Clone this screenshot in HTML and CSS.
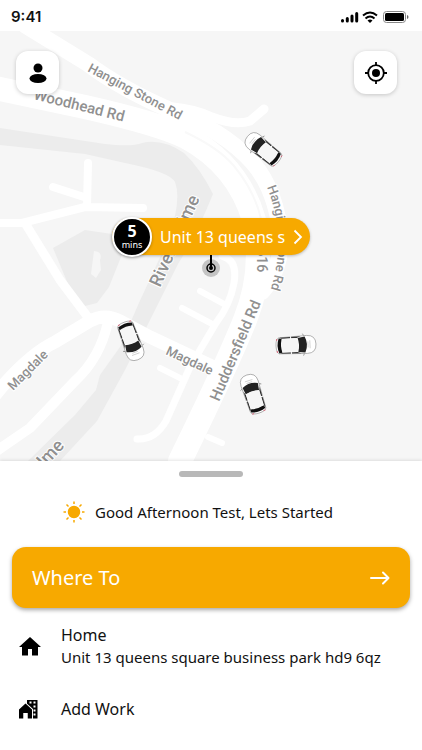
FILE: index.html
```html
<!DOCTYPE html>
<html lang="en">
<head>
    <meta charset="UTF-8">
    <meta name="viewport" content="width=device-width, initial-scale=1.0">
    <title>Book a Ride</title>
    <link rel="stylesheet" href="styles.css">
</head>
<body>
    <header class="status-bar">
        <span class="time">9:41</span>
        <svg class="status-icons" width="70" height="14" viewBox="0 0 70 14" aria-hidden="true">
            <g stroke="#000" stroke-width="3" stroke-linecap="round">
                <path d="M3.500 10.500v.5M8.300 8.500V11M13 6v5M17.700 3.500V11"/>
            </g>
            <g fill="none" stroke="#000" stroke-width="2">
                <path d="M24 5.500q7-6 14 0M26.500 8.500q4.500-4 9 0"/>
            </g>
            <path d="M28.500 10.500q2.500-2 5 0L31 13z"/>
            <rect x="44.500" y="1.500" width="22" height="11" rx="3" fill="none" stroke="#888"/>
            <rect x="46" y="3" width="19" height="8" rx="1.500"/>
            <path d="M68 5v4q1.500-.5 1.500-2T68 5z" fill="#666"/>
        </svg>
    </header>

    <main>
        <section class="map">
            <svg class="map-canvas" viewBox="0 31 422 430" role="img" aria-label="Map of nearby cars">
                <defs>
                    <g id="car">
                        <path d="M-9-11Q-9-20 0-20T9-11L8 17Q7 20 0 20T-8 17Z" fill="#fff" stroke="#888" stroke-width=".6"/>
                        <path d="M-4-14H4M-3-12H3" stroke="#ccc" stroke-width=".8"/>
                        <path d="M-9-8l-2 1M9-8l2 1" stroke="#888" stroke-width=".8"/>
                        <path d="M-8-9Q0-13 8-9L7-2Q0-4-7-2Z" fill="#222"/>
                        <path d="M-8.500-5L-7-1V14L-8 16ZM8.500-5L7-1V14L8 16Z" fill="#333"/>
                        <path d="M-7 14H7L7.500 17Q0 20-7.500 17Z" fill="#111"/>
                        <path d="M-7-1Q0-4 7-1L6.500 14Q0 16-6.500 14Z" fill="#f6f6f6"/>
                        <path d="M-9 5H-6M6 5H9" stroke="#fff"/>
                        <path d="M-7 19h2M5 19h2" stroke="#d9536b" stroke-width=".8"/>
                    </g>
                </defs>
                <rect y="31" width="422" height="430" fill="#f6f6f6"/>

                <!-- river and woodland -->
                <g fill="#ececec">
                    <path d="M0 128L105 144Q132 147 142 143Q162 138 184 153Q200 168 213 194Q197 234 178 264L145 330L125 370L97 421L60 461H28L75 415L96 390L100 375L120 347L138 305L168 240Q182 200 175 182Q170 172 125 163L85 154L0 145Z"/>
                    <path d="M53 248L85 230L112 234L123 252L109 287L97 303L85 306L73 296Z"/>
                </g>
                <path d="M94 251Q103 252 100 260L101 270L96 278L91 274Z" fill="#f6f6f6"/>

                <!-- roads -->
                <g class="road">
                    <path d="M-5 223H22L85 207L143 208M88 163L87 207M53 187L87 198" stroke-width="8"/>
                    <path d="M25 223L60 280L90 320" stroke-width="9"/>
                    <path d="M-5 395Q28 355 55 342L90 321Q105 313 120 321L150 337L220 370" stroke-width="13"/>
                    <path d="M108 322Q100 358 75 381L30 428L-5 452" stroke-width="10"/>
                    <path d="M222 256Q238 260 234 283Q230 305 216 323L190 367L166 421Q155 440 137 439" stroke-width="7"/>
                    <path d="M200 291L224 304M182 308L214 325M160 368L180 378M208 437L222 443" stroke-width="6"/>
                    <path d="M173 107Q195 109 212 117Q235 126 250 121L264 109" stroke-width="9"/>
                    <path d="M-5 88L85 107Q160 124 186 137Q238 165 254 220Q265 270 245 320Q227 365 180 461" stroke-width="24"/>
                    <path d="M26 26L88 64Q120 88 170 110Q225 131 253 163Q277 191 281 240Q280 272 262 292" stroke-width="16"/>
                </g>
                <path d="M185 132Q219 148 234 166Q262 200 264 240" fill="none" stroke="#f9f9f9" stroke-width="2"/>

                <!-- road names -->
                <g class="road-name">
                    <path id="lane" d="M267 187Q288 239 269 295" fill="none" stroke="none"/>
                    <text transform="translate(87 71) rotate(28)" font-size="13">Hanging Stone Rd</text>
                    <text transform="translate(33 99) rotate(14)" font-size="15">Woodhead Rd</text>
                    <text transform="translate(160 288) rotate(-66)" font-size="18">River Holme</text>
                    <text font-size="13"><textPath href="#lane">Hanging Stone Rd</textPath></text>
                    <text transform="translate(257 239) rotate(90)" font-size="14">A616</text>
                    <text transform="translate(219 402) rotate(-67)" font-size="15">Huddersfield Rd</text>
                    <text transform="translate(165 354) rotate(25)" font-size="13">Magdale</text>
                    <text transform="translate(13 391) rotate(-45)" font-size="13">Magdale</text>
                    <text transform="translate(29 485) rotate(-47)" font-size="18">Holme</text>
                </g>

                <!-- cars -->
                <use href="#car" transform="translate(263 149) rotate(-51)"/>
                <use href="#car" transform="translate(131 341) rotate(160)"/>
                <use href="#car" transform="translate(296 345) rotate(87)"/>
                <use href="#car" transform="translate(253 394) rotate(-18)"/>

                <!-- pickup point -->
                <circle cx="211" cy="268" r="9" fill="#c4c4c4"/>
                <circle cx="211" cy="268" r="4" fill="none" stroke="#000" stroke-width="1.500"/>
                <circle cx="211" cy="268" r="2"/>
                <path d="M211 250V268" stroke="#000" stroke-width="2"/>
            </svg>

            <div class="map-buttons">
                <button type="button" class="map-button" aria-label="Profile">
                    <svg width="24" height="24" viewBox="0 0 24 24"><circle cx="12" cy="7" r="4.500"/><ellipse cx="12" cy="17.500" rx="8.500" ry="4.500"/></svg>
                </button>
                <button type="button" class="map-button" aria-label="My location">
                    <svg width="24" height="24" viewBox="0 0 24 24"><circle cx="12" cy="12" r="7.800" fill="none" stroke="#000" stroke-width="1.800"/><circle cx="12" cy="12" r="4"/><path d="M12 1v4M12 19v4M1 12h4M19 12h4" stroke="#000" stroke-width="1.800"/></svg>
                </button>
            </div>

            <button type="button" class="pickup">
                <span class="eta"><strong>5</strong><span>mins</span></span>
                <span class="pickup-address">Unit 13 queens s</span>
                <svg width="10" height="16" viewBox="0 0 10 16" fill="none" stroke="#fff" stroke-width="1.800"><path d="M1.500 1.500L8 8l-6.500 6.500"/></svg>
            </button>
        </section>

        <section class="sheet">
            <div class="handle"></div>
            <p class="greeting">
                <svg width="22" height="22" viewBox="0 0 22 22" fill="#f7a900" stroke="#f7a900" stroke-width="1.500" aria-hidden="true">
                    <circle cx="11" cy="11" r="5.500"/>
                    <path d="M11 .5v2.500M11 19v2.500M.5 11H3M19 11h2.500M3.500 3.500l2 2M16.500 16.500l2 2M3.500 18.500l2-2M16.500 5.500l2-2"/>
                </svg>
                Good Afternoon Test, Lets Started
            </p>
            <button type="button" class="where-to">
                Where To
                <svg width="20" height="14" viewBox="0 0 20 14" fill="none" stroke="#fff" stroke-width="2" stroke-linecap="round" stroke-linejoin="round"><path d="M1 7h17M13 1.500L18.500 7 13 12.500"/></svg>
            </button>
            <ul class="places">
                <li>
                    <a class="place" href="#">
                        <svg width="22" height="20" viewBox="0 0 22 20" aria-hidden="true"><path d="M11 1L0 11h3v8.500h6V13h4v6.500h6V11h3z"/></svg>
                        <span>
                            <span class="place-name">Home</span>
                            <span class="place-address">Unit 13 queens square business park hd9 6qz</span>
                        </span>
                    </a>
                </li>
                <li>
                    <a class="place" href="#">
                        <svg width="22" height="20" viewBox="0 0 22 20" aria-hidden="true">
                            <path d="M8 1h10.500v18.500H8z"/>
                            <path d="M10.500 2.500h2v2h-2zM14.500 2.500h2v2h-2zM14.500 6.500h2v2h-2zM14.500 10.500h2v2h-2zM14.500 14.500h2v2h-2z" fill="#fff"/>
                            <path d="M0 10.500L6.500 4.500 13 10.500V19.500H8.500V14h-4v5.500H0z" stroke="#fff" stroke-width="2" paint-order="stroke"/>
                            <path d="M4.500 14h4v6h-4z" fill="#fff"/>
                        </svg>
                        <span class="place-name">Add Work</span>
                    </a>
                </li>
            </ul>
        </section>
    </main>
</body>
</html>
```
FILE: styles.css
```css
* {
    box-sizing: border-box;
}
body {
    margin: 0;
    background-color: #fff;
    color: #111;
    font-family: "Noto Sans", "Open Sans", sans-serif;
    font-size: 15px;
    line-height: 22px;
}
button {
    border: none;
    padding: 0;
    font-family: inherit;
    cursor: pointer;
}
svg {
    display: block;
    flex-shrink: 0;
}
.status-bar {
    display: flex;
    justify-content: space-between;
    align-items: center;
    height: 31px;
    padding: 2px 13px 0 11px;
}
.time {
    font-family: Inter, sans-serif;
    font-size: 15px;
    font-weight: 600;
}
.map {
    position: relative;
    overflow: hidden;
}
.map-canvas {
    width: 100%;
    height: auto;
}
.road {
    fill: none;
    stroke: #fff;
    stroke-linecap: round;
    stroke-linejoin: round;
}
.road-name {
    fill: #909090;
    stroke: #fff;
    stroke-width: 2px;
    paint-order: stroke;
    font-family: Roboto, sans-serif;
    font-weight: 500;
}
.map-buttons {
    position: absolute;
    top: 20px;
    left: 16px;
    right: 25px;
    display: flex;
    justify-content: space-between;
}
.map-button {
    display: grid;
    place-items: center;
    width: 43px;
    height: 43px;
    border-radius: 12px;
    background-color: #fff;
    box-shadow: 0 1px 4px rgba(0, 0, 0, 0.2);
}
.pickup {
    position: absolute;
    top: 43.5%;
    left: 50%;
    transform: translateX(-50%);
    display: flex;
    align-items: center;
    gap: 8px;
    width: 198px;
    height: 37px;
    padding-right: 12px;
    border-radius: 20px;
    background-color: #f7a900;
    color: #fff;
    font-size: 16px;
    white-space: nowrap;
    box-shadow: 0 1px 3px rgba(0, 0, 0, 0.25);
}
.eta {
    display: flex;
    flex-direction: column;
    align-items: center;
    justify-content: center;
    flex-shrink: 0;
    width: 40px;
    height: 40px;
    border: 2px solid #fff;
    border-radius: 50%;
    background-color: #000;
    font-size: 9px;
    line-height: 12px;
    box-shadow: 0 1px 3px rgba(0, 0, 0, 0.3);
}
.eta strong {
    font-size: 16px;
    line-height: 16px;
}
.pickup-address {
    flex: 1;
    text-align: left;
}
.sheet {
    position: relative;
    padding: 10px 12px 20px;
    background-color: #fff;
    box-shadow: 0 -1px 3px rgba(0, 0, 0, 0.1);
}
.handle {
    width: 64px;
    height: 6px;
    margin: 0 auto;
    border-radius: 3px;
    background-color: #b8b8b8;
}
.greeting {
    display: flex;
    align-items: center;
    justify-content: center;
    gap: 10px;
    margin: 24px 26px 24px 0;
}
.where-to {
    display: flex;
    align-items: center;
    justify-content: space-between;
    width: 100%;
    height: 61px;
    padding: 0 20px;
    border-radius: 14px;
    background-color: #f7a900;
    color: #fff;
    font-size: 20px;
    box-shadow: 0 2px 4px rgba(0, 0, 0, 0.35);
}
.places {
    list-style: none;
    margin: 16px 0 0;
    padding: 0 7px;
}
.place {
    display: flex;
    align-items: center;
    gap: 20px;
    margin-bottom: 30px;
    color: inherit;
    text-decoration: none;
}
.place-name,
.place-address {
    display: block;
}
.place-name {
    font-size: 16px;
}
```
